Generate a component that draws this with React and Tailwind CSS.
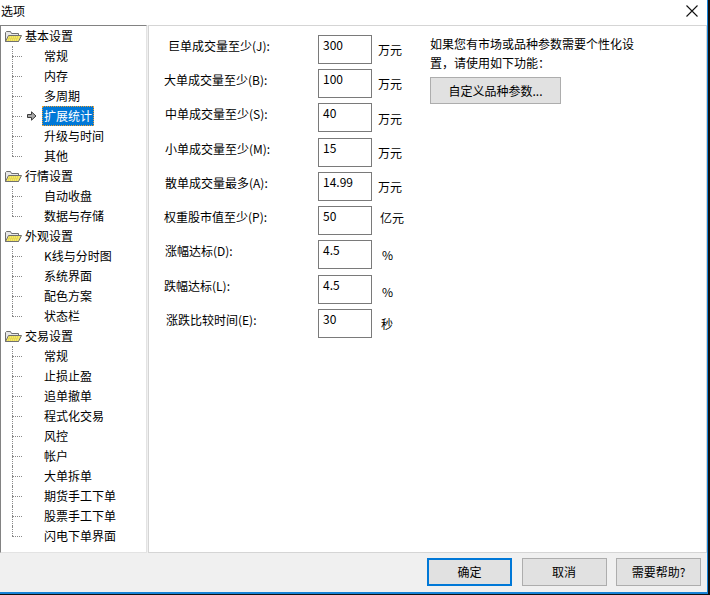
import React from "react";

const FONT = { fontFamily: '"Noto Sans CJK SC", "Noto Sans", sans-serif' };

const tree = [
  { name: "基本设置", items: ["常规", "内存", "多周期", "扩展统计", "升级与时间", "其他"] },
  { name: "行情设置", items: ["自动收盘", "数据与存储"] },
  { name: "外观设置", items: ["K线与分时图", "系统界面", "配色方案", "状态栏"] },
  {
    name: "交易设置",
    items: ["常规", "止损止盈", "追单撤单", "程式化交易", "风控", "帐户", "大单拆单", "期货手工下单", "股票手工下单", "闪电下单界面"],
  },
];

const fields = [
  { label: "巨单成交量至少(J):", value: "300", unit: "万元", lc: "pl-[4px]", uc: "ml-[6px] mt-[1px]" },
  { label: "大单成交量至少(B):", value: "100", unit: "万元", lc: "pl-0", uc: "ml-[6px] mt-[1px]" },
  { label: "中单成交量至少(S):", value: "40", unit: "万元", lc: "pl-[1px]", uc: "ml-[6px] mt-[1px]" },
  { label: "小单成交量至少(M):", value: "15", unit: "万元", lc: "pl-[1px]", uc: "ml-[6px] mt-[1px]" },
  { label: "散单成交量最多(A):", value: "14.99", unit: "万元", lc: "pl-[1px]", uc: "ml-[6px] mt-[1px]" },
  { label: "权重股市值至少(P):", value: "50", unit: "亿元", lc: "pl-0", uc: "ml-[8px] mb-[7px]" },
  { label: "涨幅达标(D):", value: "4.5", unit: "%", lc: "pl-[1px]", uc: "ml-[10px] mt-[0px]" },
  { label: "跌幅达标(L):", value: "4.5", unit: "%", lc: "pl-0", uc: "ml-[10px] mt-[4px]" },
  { label: "涨跌比较时间(E):", value: "30", unit: "秒", lc: "pl-[2px]", uc: "ml-[9px] mt-[0px]" },
];

const FolderIcon = () => (
  <svg width="17" height="13" viewBox="0 0 17 13">
    <path d="M0.5 2.5 L0.5 11.5 L13.5 11.5 L13.5 3.5 L6.5 3.5 L5.5 1.5 L1.5 1.5 Z" fill="#e8e8e8" stroke="#707070" />
    <path d="M0.5 11.5 L3.5 5.5 L16.5 5.5 L13.5 11.5 Z" fill="#f4e86a" stroke="#707070" />
    <path d="M4 7 H14 M3.5 8.5 H13.5 M3 10 H13" stroke="#d8c840" strokeDasharray="1 1" />
  </svg>
);

const ArrowIcon = () => (
  <svg width="10" height="10" viewBox="0 0 10 10">
    <path d="M0.5 3.5 H4.5 V0.8 L9 5 L4.5 9.2 V6.5 H0.5 Z" fill="#a8a8a8" stroke="#3c3c3c" />
  </svg>
);

const TreeChild = ({ label, last, selected }) => (
  <div className="flex h-[20px] items-stretch">
    <div className="w-[11px] shrink-0" />
    <div className="flex w-[10px] shrink-0 flex-col">
      <div className="h-[10px] border-l border-dotted border-[#8a8a8a]" />
      <div
        className={
          last
            ? "h-[10px] border-t border-dotted border-[#8a8a8a]"
            : "h-[10px] border-l border-t border-dotted border-[#8a8a8a]"
        }
      />
    </div>
    <div className="flex w-[20px] shrink-0 items-center pl-[5px]">{selected && <ArrowIcon />}</div>
    <div className="flex items-center">
      <span
        className={
          selected
            ? "h-[20px] border border-dotted border-[#f0a030] bg-[#0078d7] pl-[1px] pr-[1px] leading-[18px] text-white"
            : "h-[20px] border border-transparent pl-[1px] pr-[1px] leading-[18px] text-black"
        }
      >
        {label}
      </span>
    </div>
  </div>
);

const Tree = () => (
  <div className="h-[528px] w-[147px] shrink-0 overflow-hidden border-l border-t border-[#828282] border-r-[#e3e3e3] border-b-[#e3e3e3] border-r border-b bg-white">
    {tree.map((cat) => (
      <div key={cat.name}>
        <div className="flex h-[20px] items-center pl-[4px]">
          <FolderIcon />
          <span className="ml-[3px] leading-[20px] text-black">{cat.name}</span>
        </div>
        {cat.items.map((it, i) => (
          <TreeChild
            key={cat.name + it}
            label={it}
            last={i === cat.items.length - 1}
            selected={it === "扩展统计"}
          />
        ))}
      </div>
    ))}
  </div>
);

const FormRow = ({ f }) => (
  <div className="flex h-[34.3px] items-center">
    <div className={"mb-[8px] w-[154px] shrink-0 leading-[15px] text-black " + f.lc}>{f.label}</div>
    <div className="h-[29px] w-[54px] shrink-0 border border-[#7a7a7a] bg-white pl-[4px] pt-[1px] leading-[15px] text-black">
      {f.value}
    </div>
    <div className={"leading-[15px] text-black " + f.uc}>{f.unit}</div>
  </div>
);

const Button = ({ children, primary }) => (
  <button
    className={
      primary
        ? "h-[28px] w-[85px] border-2 border-[#0078d7] bg-[#e1e1e1] text-[12px] text-black"
        : "h-[28px] w-[85px] border border-[#adadad] bg-[#e1e1e1] text-[12px] text-black"
    }
  >
    {children}
  </button>
);

export default function App() {
  return (
    <div className="h-[595px] w-[710px] bg-[#101010]" style={FONT}>
      <div className="flex h-[594px] w-[708px] flex-col border-b-2 border-r border-[#1883d7] bg-[#f0f0f0] text-[12px]">
        {/* Title bar */}
        <div className="flex h-[25px] shrink-0 items-start justify-between bg-white">
          <span className="pl-[1px] pt-[3px] leading-[15px] text-black">选项</span>
          <svg className="mr-[9px] mt-[5px]" width="12" height="12" viewBox="0 0 12 12">
            <path d="M0.5 0.5 L11.5 11.5 M11.5 0.5 L0.5 11.5" stroke="#111" strokeWidth="1.1" />
          </svg>
        </div>

        {/* Body */}
        <div className="flex h-[528px] shrink-0">
          <Tree />
          <div className="ml-[1px] flex flex-1 border border-[#d5d5d5] bg-white pl-[15px] pt-[6px]">
            <div className="w-[266px] shrink-0">
              {fields.map((f) => (
                <FormRow key={f.label} f={f} />
              ))}
            </div>
            <div className="flex flex-col pt-[1.5px]">
              <p className="w-[220px] leading-[19px] text-black">如果您有市场或品种参数需要个性化设置，请使用如下功能：</p>
              <button className="mt-[5.5px] h-[27px] w-[131px] border border-[#adadad] bg-[#e1e1e1] text-[12px] text-black">
                自定义品种参数...
              </button>
            </div>
          </div>
        </div>

        {/* Footer */}
        <div className="flex flex-1 items-start justify-end gap-[9.5px] pr-[6px] pt-[4.5px]">
          <Button primary>确定</Button>
          <Button>取消</Button>
          <Button>需要帮助?</Button>
        </div>
      </div>
    </div>
  );
}
